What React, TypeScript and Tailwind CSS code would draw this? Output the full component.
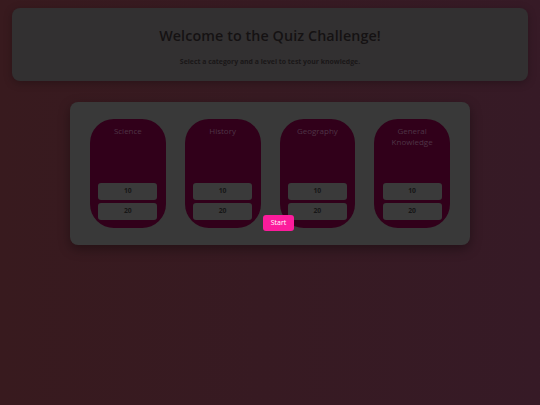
import React from "react";

const categories = [
  { name: "Science" },
  { name: "History" },
  { name: "Geography" },
  { name: "General Knowledge" },
];

export default function App() {
  return (
    <div
      className="w-full min-h-[405px] bg-gradient-to-r from-[#381a1e] to-[#361a26] pt-2 px-3"
      style={{ fontFamily: '"Open Sans", "Noto Sans", sans-serif' }}
    >
      <div className="h-[73px] rounded-lg bg-[#323031] shadow-[0_2px_8px_rgba(0,0,0,0.25)] flex flex-col items-center">
        <h1 className="mt-[18px] text-[14.3px] leading-[20px] font-semibold text-[#151213] tracking-[0.1px]">
          Welcome to the Quiz Challenge!
        </h1>
        <p className="mt-[11px] text-[6.9px] leading-[9px] font-bold text-[#1a1718]">
          Select a category and a level to test your knowledge.
        </p>
      </div>

      <div className="relative mx-auto mt-[21px] w-[400px] h-[143px] rounded-lg bg-[#393939] shadow-[0_4px_12px_rgba(0,0,0,0.35)] px-5 pt-[17px]">
        <div className="flex gap-[19px]">
          {categories.map((c) => (
            <div
              key={c.name}
              className="w-[76px] h-[109px] rounded-[24px] bg-[#31001a] flex flex-col items-center px-2"
            >
              <div className="mt-[6px] h-[58px] text-center text-[8px] leading-[11px] text-[#4f3446]">
                {c.name}
              </div>
              <button className="w-[59px] h-[17px] rounded-[3px] bg-[#3a3a3a] text-[6.8px] font-bold text-[#161616]">
                10
              </button>
              <button className="mt-[3px] w-[59px] h-[17px] rounded-[3px] bg-[#3a3a3a] text-[6.8px] font-bold text-[#161616]">
                20
              </button>
            </div>
          ))}
        </div>
        <button className="absolute left-[193px] top-[113px] w-[31px] h-[16px] rounded-[3px] bg-[#fc1c9c] text-[7px] text-white">
          Start
        </button>
      </div>
    </div>
  );
}
